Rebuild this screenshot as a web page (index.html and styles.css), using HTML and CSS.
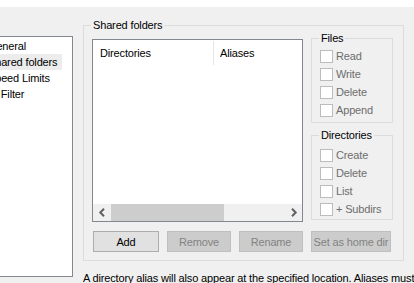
FILE: index.html
```html
<!DOCTYPE html>
<html lang="en">

<head>
    <meta charset="UTF-8">
    <meta name="viewport" content="width=device-width, initial-scale=1.0">
    <title>Users - Shared folders</title>
    <link rel="stylesheet" href="styles.css">
</head>

<body>
    <div class="topBar"></div>

    <div class="page">

        <div class="tree">
            <div class="treeItem">General</div>
            <div class="treeItem selected">Shared folders</div>
            <div class="treeItem">Speed Limits</div>
            <div class="treeItem">IP Filter</div>
        </div>

        <div class="content">
            <div class="group sharedGroup">
                <span class="groupLabel">Shared folders</span>

                <div class="sharedInner">
                    <div class="listCol">
                        <div class="listBox">
                            <div class="listHeader">
                                <div class="headCell headDirs">Directories</div>
                                <div class="headCell headAliases">Aliases</div>
                            </div>
                            <div class="listBody"></div>
                            <div class="hScroll">
                                <div class="scrollArrow">
                                    <svg width="8" height="9" viewBox="0 0 8 9">
                                        <path d="M6 0.8 L2.3 4.5 L6 8.2" fill="none" stroke="#606060" stroke-width="2"/>
                                    </svg>
                                </div>
                                <div class="scrollTrack">
                                    <div class="scrollThumb"></div>
                                </div>
                                <div class="scrollArrow">
                                    <svg width="8" height="9" viewBox="0 0 8 9">
                                        <path d="M2 0.8 L5.7 4.5 L2 8.2" fill="none" stroke="#606060" stroke-width="2"/>
                                    </svg>
                                </div>
                            </div>
                        </div>

                        <div class="buttonRow">
                            <button class="btn btnAdd">Add</button>
                            <button class="btn btnSmall" disabled>Remove</button>
                            <button class="btn btnSmall" disabled>Rename</button>
                        </div>
                    </div>

                    <div class="permCol">
                        <div class="group permGroup">
                            <span class="groupLabel">Files</span>
                            <label class="check"><span class="box"></span>Read</label>
                            <label class="check"><span class="box"></span>Write</label>
                            <label class="check"><span class="box"></span>Delete</label>
                            <label class="check"><span class="box"></span>Append</label>
                        </div>

                        <div class="group permGroup dirGroup">
                            <span class="groupLabel">Directories</span>
                            <label class="check"><span class="box"></span>Create</label>
                            <label class="check"><span class="box"></span>Delete</label>
                            <label class="check"><span class="box"></span>List</label>
                            <label class="check"><span class="box"></span>+ Subdirs</label>
                        </div>

                        <button class="btn btnHome" disabled>Set as home dir</button>
                    </div>
                </div>
            </div>

            <p class="note">A directory alias will also appear at the specified location. Aliases must contain the full local path.</p>
        </div>

        <div class="group nextGroup"></div>

    </div>
</body>

</html>
```

FILE: styles.css
```css
body {
    margin: 0;
    padding: 0;
    width: 414px;
    height: 283px;
    overflow: hidden;
    background: #f0f0f0;
    font-family: "Liberation Sans", Arial, sans-serif;
    font-size: 11px;
    letter-spacing: -0.15px;
    color: #000;
}

.topBar {
    height: 7px;
    background: #fff;
}

.page {
    display: flex;
    align-items: flex-start;
    padding-top: 18px;
}

/* lista stron po lewej */
.tree {
    flex: none;
    width: 131px;
    height: 238px;
    margin-left: -60px;
    margin-top: 11px;
    padding-top: 1px;
    box-sizing: content-box;
    background: #fff;
    border: 1px solid #828790;
}

.treeItem {
    height: 16px;
    line-height: 16px;
    padding-left: 47px;
    white-space: nowrap;
}

.treeItem.selected {
    width: 74px;
    background: #ececec;
}

.content {
    flex: none;
    margin-left: 10px;
}

.group {
    position: relative;
    border: 1px solid #dcdcdc;
}

.groupLabel {
    position: absolute;
    top: -7px;
    left: 7px;
    padding: 0 2px;
    background: #f0f0f0;
    line-height: 13px;
    color: #000;
}

.sharedGroup {
    width: 319px;
    height: 234px;
}

.sharedInner {
    display: flex;
    gap: 8px;
    padding: 13px 0 0 8px;
}

.listCol {
    width: 211px;
}

.listBox {
    display: flex;
    flex-direction: column;
    height: 181px;
    background: #fff;
    border: 1px solid #828790;
}

.listHeader {
    display: flex;
    height: 24px;
    padding-top: 1px;
}

.headCell {
    line-height: 24px;
    padding-left: 7px;
}

.headDirs {
    width: 113px;
    border-right: 1px solid #e5e5e5;
}

.headAliases {
    padding-left: 6px;
}

.listBody {
    flex: 1;
}

.hScroll {
    display: flex;
    height: 17px;
    background: #f0f0f0;
}

.scrollArrow {
    display: flex;
    align-items: center;
    justify-content: center;
    width: 17px;
}

.scrollArrow svg {
    display: block;
}

.scrollTrack {
    flex: 1;
    padding: 0 1px;
}

.scrollThumb {
    width: 113px;
    height: 17px;
    background: #cdcdcd;
}

.buttonRow {
    display: flex;
    gap: 8px;
    margin-top: 9px;
    padding-left: 1px;
}

.btn {
    height: 21px;
    padding: 0;
    font-family: inherit;
    font-size: 11px;
    letter-spacing: -0.15px;
    color: #000;
    background: #e1e1e1;
    border: 1px solid #adadad;
    white-space: nowrap;
}

.btn:disabled {
    color: #838383;
    background: #cccccc;
    border-color: #bfbfbf;
}

.btnAdd {
    width: 66px;
}

.btnSmall {
    width: 64px;
}

.permCol {
    display: flex;
    flex-direction: column;
    width: 82px;
    margin-top: -1px;
}

.permGroup {
    width: 72px;
    height: 75px;
    padding: 8px 0 0 8px;
    box-sizing: content-box;
}

.dirGroup {
    height: 73px;
    padding-top: 10px;
    margin-top: 12px;
}

.check {
    display: flex;
    align-items: center;
    height: 18px;
    color: #6d6d6d;
    white-space: nowrap;
}

.box {
    width: 11px;
    height: 11px;
    margin-right: 3px;
    background: #fff;
    border: 1px solid #bcbcbc;
}

.btnHome {
    width: 80px;
    margin-top: 11px;
}

.note {
    margin: 11px 0 0;
    white-space: nowrap;
    line-height: 13px;
}

.nextGroup {
    flex: none;
    width: 100px;
    height: 240px;
    margin-left: 9px;
}
```
